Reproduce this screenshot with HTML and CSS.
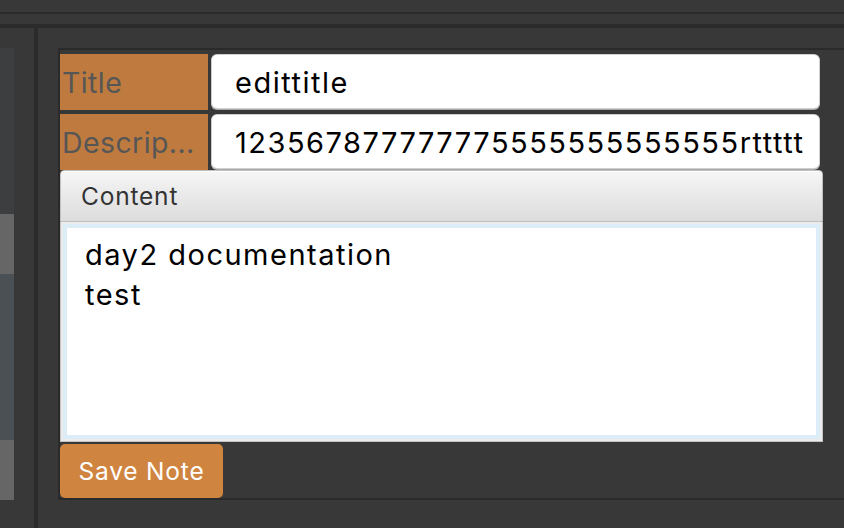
FILE: index.html
```html
<!DOCTYPE html>
<html>
<head>
<meta charset="utf-8">
<link rel="stylesheet" href="styles.css">
</head>
<body>
<div class="top-a"></div>
<div class="top-b"></div>
<div class="main">
  <div class="side">
    <div class="side-blk dark"></div>
    <div class="side-blk grey"></div>
    <div class="side-blk slate"></div>
    <div class="side-blk grey"></div>
  </div>
  <div class="divider"></div>
  <div class="content">
    <div class="panel">
      <div class="form">
        <div class="row">
          <div class="label">Title</div>
          <div class="field">edittitle</div>
        </div>
        <div class="row">
          <div class="label">Descrip...</div>
          <div class="field">123567877777775555555555555rttttt</div>
        </div>
        <div class="pane">
          <div class="pane-head">Content</div>
          <div class="pane-body">
            <div class="area">day2 documentation<br>test</div>
          </div>
        </div>
        <div class="actions">
          <button class="save">Save Note</button>
        </div>
      </div>
    </div>
  </div>
</div>
</body>
</html>
```
FILE: styles.css
```css
html, body {
  margin: 0;
  padding: 0;
  background: #383838;
  overflow: hidden;
  font-family: "Inter", "Liberation Sans", sans-serif;
}
.top-a {
  height: 12px;
  border-bottom: 2px solid #2a2a2a;
}
.top-b {
  height: 10px;
  border-bottom: 4px solid #2b2b2b;
}
.main {
  display: flex;
  height: 500px;
}
.side {
  width: 14px;
  padding-top: 20px;
  display: flex;
  flex-direction: column;
}
.side-blk.dark { height: 166px; background: #3c3e40; }
.side-blk.grey { height: 60px; background: #666666; }
.side-blk.slate { height: 166px; background: #4a5053; }
.divider {
  width: 4px;
  margin-left: 20px;
  background: #2b2b2b;
}
.content {
  flex: 1;
  padding: 20px 0 0 20px;
}
.panel {
  border: 2px solid #2a2a2a;
  border-right: none;
  height: 444px;
  padding-top: 4px;
}
.form {
  width: 763px;
  display: flex;
  flex-direction: column;
  gap: 4px;
}
.row {
  display: flex;
  gap: 4px;
  height: 56px;
}
.label {
  width: 146px;
  padding-left: 2px;
  background: #bf7b3f;
  color: #565656;
  font-size: 28.5px;
  letter-spacing: 0.4px;
  display: flex;
  align-items: center;
  padding-top: 1px;
  box-sizing: content-box;
  height: 55px;
}
.field {
  flex: 1;
  margin: 1px 4px 2px 0;
  background: #fff;
  border-radius: 5px;
  box-shadow: 0 0 0 1px #cfcfcf, 0 1px 0 1px #a9a9a9;
  color: #000;
  font-size: 29px;
  letter-spacing: 1.5px;
  padding: 2px 0 0 23px;
  display: flex;
  align-items: center;
  white-space: nowrap;
  overflow: hidden;
}
.pane {
  margin-top: -4px;
  height: 272px;
  display: flex;
  flex-direction: column;
}
.pane-head {
  height: 50px;
  border: 1px solid #c0c0c0;
  border-radius: 4px 4px 0 0;
  background: linear-gradient(#f6f6f6, #dcdcdc);
  box-shadow: inset 0 1px 0 #ffffff;
  color: #333;
  font-size: 24.5px;
  letter-spacing: 0.8px;
  padding-left: 20px;
  display: flex;
  align-items: center;
}
.pane-body {
  flex: 1;
  border: 1px solid #c2c2c2;
  border-top: none;
  background: #ececec;
  padding: 2px;
  display: flex;
}
.area {
  flex: 1;
  background: #fff;
  border: 4px solid #dcedf7;
  padding: 7px 0 0 18px;
  font-size: 29px;
  letter-spacing: 1.5px;
  line-height: 40px;
  color: #000;
}
.actions {
  margin-top: -2px;
}
.save {
  width: 163px;
  height: 54px;
  border: none;
  border-radius: 5px;
  background: #cf843f;
  color: #fff;
  font-family: "Inter", "Liberation Sans", sans-serif;
  font-size: 24.5px;
  letter-spacing: 0.8px;
  padding: 0;
}
```
